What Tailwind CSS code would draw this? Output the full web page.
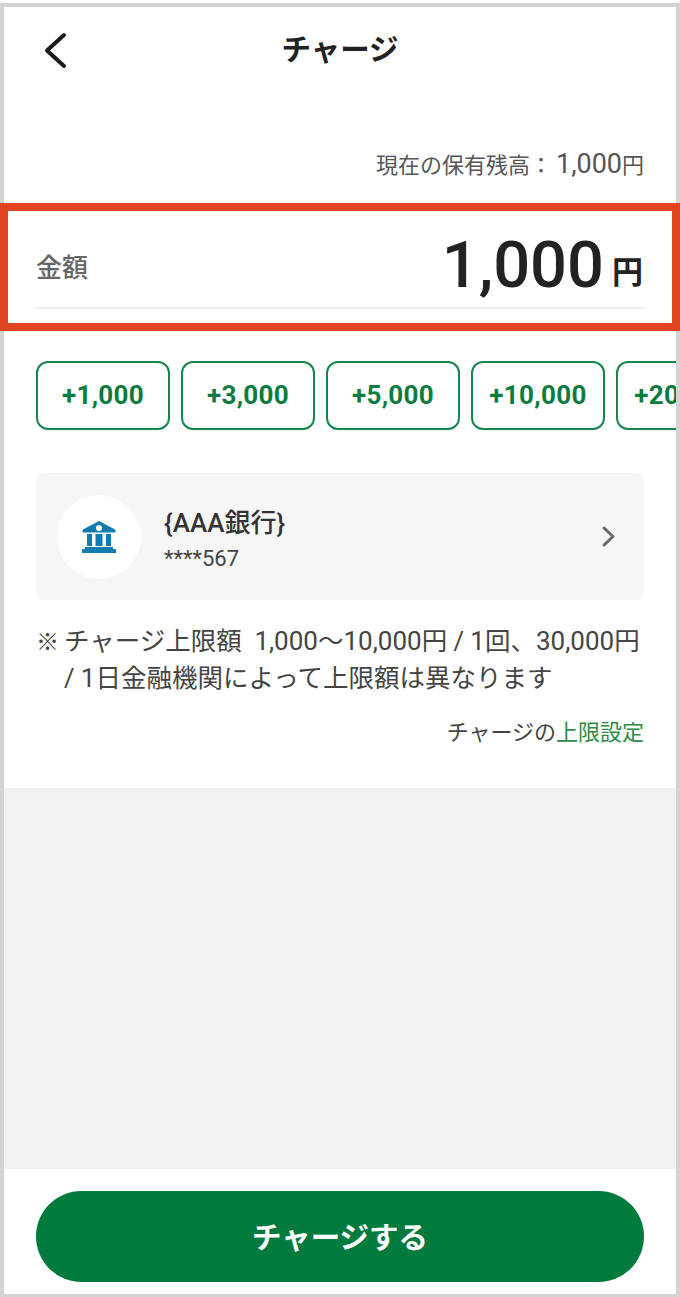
<!DOCTYPE html>
<html lang="ja">
<head>
  <meta charset="UTF-8" />
  <title>チャージ</title>
  <script src="https://cdn.jsdelivr.net/npm/@tailwindcss/browser@4"></script>
</head>
<body class="bg-white font-['Roboto','Noto_Sans_CJK_JP',sans-serif]">
  <div class="h-[1297px] w-[680px] pt-[3px]">
    <div class="relative flex h-[1294px] flex-col border-x-4 border-t-4 border-b-[3px] border-[#d4d4d4] bg-white">

      <!-- header -->
      <header class="relative flex h-[88px] shrink-0 items-center justify-center">
        <svg class="absolute left-[36px] top-[23px]" width="30" height="42" viewBox="0 0 30 42" fill="none">
          <path d="M24 5 L7 20.5 L24 36" stroke="#1a1a1a" stroke-width="4" stroke-linecap="round" stroke-linejoin="round"/>
        </svg>
        <h1 class="text-[29.5px] leading-none font-bold text-[#222]">チャージ</h1>
      </header>

      <p class="mt-[53px] h-[32px] pr-8 text-right text-[22px] leading-8 text-[#555]">現在の保有残高：<span class="ml-1 text-[27px]">1,000</span>円</p>

      <!-- amount -->
      <section class="relative mt-[23px] h-[128px] shrink-0 px-8">
        <div class="absolute -inset-x-1 inset-y-0 border-[8px] border-[#e04420]"></div>
        <div class="flex h-[106px] items-end justify-between border-b-2 border-[#eeeeee] pb-[6px]">
          <span class="mb-[17px] text-[26px] leading-8 font-medium text-[#666]">金額</span>
          <span class="flex items-end gap-2 pr-px text-[#222]">
            <span class="text-[65px] leading-[72px] font-medium">1,000</span>
            <span class="mb-[10px] text-[31px] leading-9 font-bold">円</span>
          </span>
        </div>
      </section>

      <!-- quick add buttons -->
      <div class="mt-[30px] flex gap-[11px] overflow-hidden pl-8">
        <button class="h-[69px] w-[134px] shrink-0 rounded-[12px] border-2 border-[#15874c] text-[26px] font-bold tracking-[0.3px] text-[#0a7c3e]">+1,000</button>
        <button class="h-[69px] w-[134px] shrink-0 rounded-[12px] border-2 border-[#15874c] text-[26px] font-bold tracking-[0.3px] text-[#0a7c3e]">+3,000</button>
        <button class="h-[69px] w-[134px] shrink-0 rounded-[12px] border-2 border-[#15874c] text-[26px] font-bold tracking-[0.3px] text-[#0a7c3e]">+5,000</button>
        <button class="h-[69px] w-[134px] shrink-0 rounded-[12px] border-2 border-[#15874c] text-[26px] font-bold tracking-[0.3px] text-[#0a7c3e]">+10,000</button>
        <button class="h-[69px] w-[134px] shrink-0 rounded-[12px] border-2 border-[#15874c] text-[26px] font-bold tracking-[0.3px] text-[#0a7c3e]">+20,000</button>
      </div>

      <!-- bank card -->
      <div class="mx-8 mt-[43px] flex h-[127px] shrink-0 items-center rounded-lg bg-[#f6f6f6] pr-[27px] pl-[21px]">
        <div class="flex size-[84px] items-center justify-center rounded-full bg-white">
          <svg width="34" height="32" viewBox="0 0 34 32" fill="#0f7cb0">
            <path d="M17 0 L33 8.5 Q34.5 11.5 32 11.5 H2 Q-0.5 11.5 1 8.5 Z"/>
            <rect x="5" y="13" width="5" height="12"/>
            <rect x="13.5" y="13" width="7" height="12"/>
            <rect x="24" y="13" width="5" height="12"/>
            <path d="M3 26 H31 V28 H33 Q34 28 34 29 V32 H0 V29 Q0 28 1 28 H3 Z"/>
            <circle cx="17" cy="7" r="3" fill="#fff"/>
          </svg>
        </div>
        <div class="ml-[23px] flex-1 pt-1">
          <p class="text-[26px] leading-8 font-medium text-[#333]">{AAA銀行}</p>
          <p class="mt-2 text-[22px] leading-6 text-[#444]">****567</p>
        </div>
        <svg width="16" height="24" viewBox="0 0 16 24" fill="none">
          <path d="M3 3 L12 11.5 L3 20" stroke="#666" stroke-width="3" stroke-linecap="round" stroke-linejoin="round"/>
        </svg>
      </div>

      <!-- notes -->
      <div class="mt-[23px] flex items-baseline px-8 text-[25.5px] leading-[37px] text-[#444]">
        <span class="w-7 shrink-0 text-[23px]">※</span>
        <p>チャージ上限額&nbsp; <span class="text-[26px]">1,000</span>〜<span class="text-[26px]">10,000</span>円 / <span class="text-[26px]">1</span>回、<span class="text-[26px]">30,000</span>円 / <span class="text-[26px]">1</span>日金融機関によって上限額は異なります</p>
      </div>
      <p class="mt-[22px] pr-8 text-right text-[22px] leading-7 text-[#444]">チャージの<span class="text-[#2e8b46]">上限設定</span></p>

      <!-- gray filler -->
      <div class="mt-[41px] flex-1 bg-[#f3f2f0]"></div>

      <!-- footer -->
      <footer class="flex h-[125px] shrink-0 items-start px-8 pt-[22px]">
        <button class="h-[91px] w-full rounded-full bg-[#007b3d] pt-1 text-[29.5px] font-bold text-white">チャージする</button>
      </footer>
    </div>
  </div>
</body>
</html>
